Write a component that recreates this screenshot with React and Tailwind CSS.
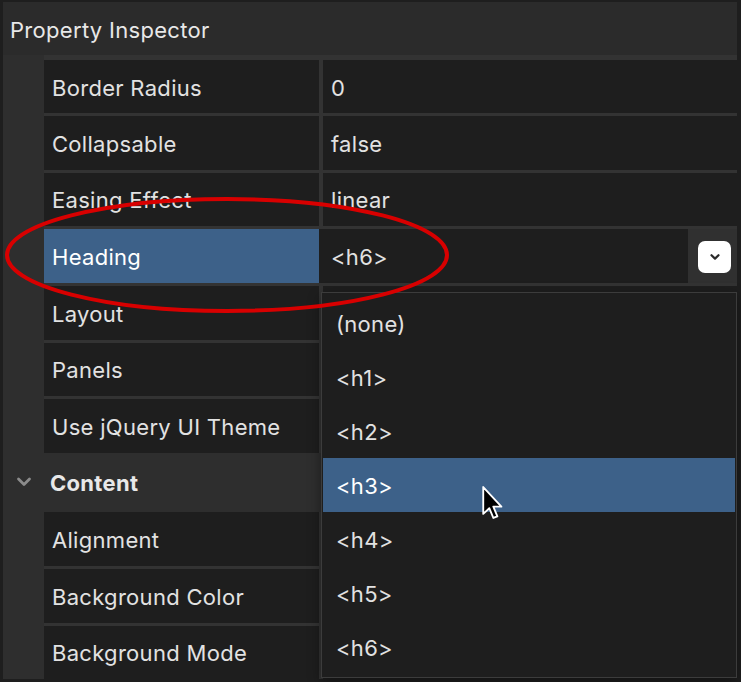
import React from 'react';

const rows = [
  { label: 'Border Radius', value: '0', top: 'border-t-[5px]', h: 'h-[58px]' },
  { label: 'Collapsable', value: 'false' },
  { label: 'Easing Effect', value: 'linear' },
  { label: 'Heading', value: '<h6>', selected: true },
  { label: 'Layout', value: '' },
  { label: 'Panels', value: '' },
  { label: 'Use jQuery UI Theme', value: '' },
];

const contentRows = [
  { label: 'Alignment', value: '', top: 'border-t-0', h: 'h-[54.33px]' },
  { label: 'Background Color', value: '' },
  { label: 'Background Mode', value: '' },
];

const options = ['(none)', '<h1>', '<h2>', '<h3>', '<h4>', '<h5>', '<h6>'];

function Row({ label, value, selected, top = 'border-t-[3.67px]', h = 'h-[56.67px]' }) {
  return (
    <div className={`flex ${h}`}>
      <div className="w-[41px] shrink-0 bg-[#2e2e2e]" />
      <div
        className={`w-[275px] shrink-0 ${top} border-[#333333] flex items-center pl-[8px] pt-[3px] ${
          selected ? 'bg-[#3d6189] text-white' : 'bg-[#1e1e1e]'
        }`}
      >
        {label}
      </div>
      <div className={`w-[4px] shrink-0 ${top} border-[#333333] ${selected ? 'bg-[#1e1e1e]' : 'bg-[#333333]'}`} />
      {selected ? (
        <div className={`flex-1 flex ${top} border-[#333333]`}>
          <div className="flex-1 bg-[#1e1e1e] flex items-center pl-[8px] pt-[3px]">{value}</div>
          <div className="w-[49px] bg-[#303030] flex items-center pl-[10px] -mb-[2px]">
            <div className="w-[33px] h-[32px] rounded-[7px] bg-white flex items-center justify-center">
              <svg width="12" height="8" viewBox="0 0 12 8">
                <path d="M2.5 2.2 6 5.6 9.5 2.2" fill="none" stroke="#2a2a2a" strokeWidth="2.2" strokeLinecap="round" strokeLinejoin="round" />
              </svg>
            </div>
          </div>
        </div>
      ) : (
        <div className={`flex-1 bg-[#1e1e1e] ${top} border-[#333333] flex items-center pl-[8px] pt-[3px]`}>{value}</div>
      )}
    </div>
  );
}

export default function App() {
  return (
    <div
      className="relative w-[741px] h-[682px] overflow-hidden bg-[#1e1e1e] pt-[2px] pl-[3px] pr-[4px] pb-[3px] text-[22px] tracking-[0.3px] text-[#e2e2e2]"
      style={{ fontFamily: 'Inter, "Noto Sans", sans-serif' }}
    >
      {/* Header */}
      <div className="h-[53px] bg-[#2b2b2b] flex items-center pl-[7px] pt-[3px] text-[#e8e8e8]">Property Inspector</div>

      {/* Property rows */}
      <div className="flex flex-col bg-[#333333]">
        {rows.map((r) => (
          <Row key={r.label} {...r} />
        ))}

        {/* Group header */}
        <div className="h-[58.67px] flex items-center bg-[#2e2e2e]">
          <div className="w-[41px] flex items-center justify-center pl-[1px]">
            <svg width="18" height="12" viewBox="0 0 18 12">
              <path d="M3.5 3 9 8.5 14.5 3" fill="none" stroke="#8b8b8b" strokeWidth="2.8" strokeLinecap="round" strokeLinejoin="round" />
            </svg>
          </div>
          <span className="font-bold pl-[6px] pt-[2px] text-[#e8e8e8]">Content</span>
        </div>

        {contentRows.map((r) => (
          <Row key={r.label} {...r} />
        ))}
      </div>

      {/* Dropdown list */}
      <div className="absolute left-[321px] top-[292px] w-[416px] h-[386px] bg-[#1e1e1e] border-[1.5px] border-[#3c3c3c] pt-[3px] px-[1px] shadow-[0_4px_12px_rgba(0,0,0,0.4)]">
        {options.map((o) => (
          <div
            key={o}
            className={`h-[54px] flex items-center pl-[13px] pt-[2px] ${o === '<h3>' ? 'bg-[#3d6189] text-white' : ''}`}
          >
            {o}
          </div>
        ))}
      </div>

      {/* Mouse cursor */}
      <svg className="absolute left-[481px] top-[485px]" width="24" height="37" viewBox="0 0 14 22">
        <path
          d="M1.2 1.2 L1.2 17.2 L4.8 13.8 L7.2 19.6 L9.6 18.6 L7.2 12.9 L12 12.9 Z"
          fill="#000"
          stroke="#fff"
          strokeWidth="1.1"
          strokeLinejoin="round"
        />
      </svg>

      {/* Red annotation ellipse */}
      <svg className="absolute left-0 top-0 pointer-events-none" width="741" height="682">
        <ellipse cx="227" cy="255" rx="220" ry="56" fill="none" stroke="#d80000" strokeWidth="4" />
      </svg>
    </div>
  );
}
